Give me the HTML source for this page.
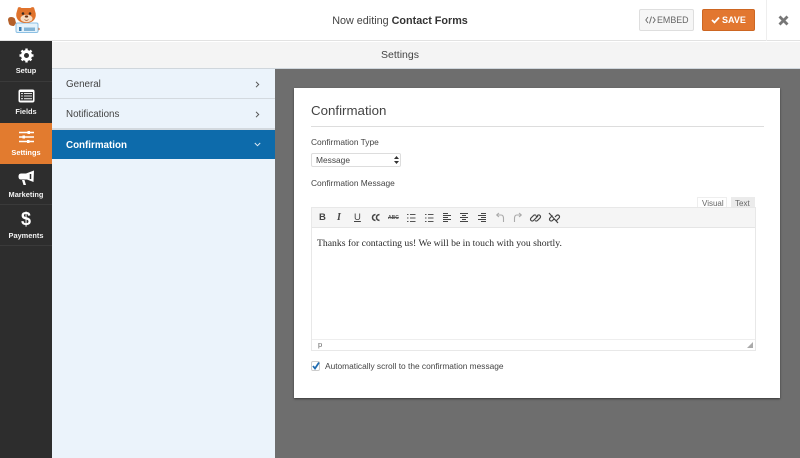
<!DOCTYPE html>
<html>
<head>
<meta charset="utf-8">
<style>
*{box-sizing:border-box}
html,body{margin:0;padding:0;width:800px;height:458px;overflow:hidden;background:#fff;font-family:"Liberation Sans",sans-serif}
.a{position:absolute}
.t{position:absolute;white-space:nowrap}
.side{text-align:center;color:#f2f2f2;font-size:7.4px;font-weight:bold;width:52px;left:0}
</style>
</head>
<body>
<!-- header -->
<div class="a" style="left:0;top:0;width:800px;height:41px;background:#fff;border-bottom:1px solid #e2e2e2"></div>
<svg class="a" style="left:0;top:0" width="44" height="40" viewBox="0 0 44 40">
<path d="M8 20q0-3 3-3t4 2l1 4-2 3q-4 0-5-2z" fill="#b4602a"/>
<path d="M37 26l3 3-3 3z" fill="#d9682a"/>
<rect x="16" y="23" width="22" height="9.500" rx="1.500" fill="#e4f2fb" stroke="#8cc0e4" stroke-width="1"/>
<path d="M17 11l1-3.500q2-1 3.500.5h9q1.500-1.500 3.500-.5l1 3.500q2 5-1 9-3 3-8 3t-8-3q-3-4-1-9z" fill="#e0732c"/>
<ellipse cx="26.500" cy="18.500" rx="6" ry="3.800" fill="#f6dcc2"/>
<circle cx="23" cy="13.500" r="1.300" fill="#3a2a20"/><circle cx="30" cy="13.500" r="1.300" fill="#3a2a20"/>
<ellipse cx="26.500" cy="16.500" rx="1.700" ry="1.100" fill="#6b3417"/>
<path d="M24.500 19.500q2 1.800 4 0" stroke="#a0522d" stroke-width=".7" fill="none"/>
<rect x="19" y="27" width="2.500" height="4" fill="#3a7fb5"/><rect x="24" y="27.500" width="11" height="3.500" fill="#83b4d6"/>
</svg>
<div class="t" style="left:0;width:800px;text-align:center;top:14px;font-size:10.800px;line-height:14px;color:#444">Now editing <b style="color:#333">Contact Forms</b></div>
<div class="a" style="left:639px;top:9px;width:55px;height:22px;background:#f6f6f6;border:1px solid #dedede;border-radius:2px"></div>
<svg class="a" style="left:645px;top:16px" width="11" height="8" viewBox="0 0 11 8" fill="none" stroke="#666" stroke-width=".9"><path d="M3 1L.8 4 3 7M8 1l2.200 3L8 7M6.500.5l-2 7"/></svg>
<div class="t" style="left:657px;top:14px;font-size:8.900px;line-height:12px;color:#666">EMBED</div>
<div class="a" style="left:702px;top:9px;width:53px;height:22px;background:#e27730;border:1px solid #cd6622;border-radius:2px"></div>
<svg class="a" style="left:711px;top:16px" width="9" height="8" viewBox="0 0 9 8"><path d="M1 4l2.500 2.500L8 1.500" fill="none" stroke="#fff" stroke-width="1.800"/></svg>
<div class="t" style="left:722px;top:14px;font-size:9px;line-height:12px;color:#fff;font-weight:bold">SAVE</div>
<div class="a" style="left:766px;top:0;width:1px;height:41px;background:#eee"></div>
<svg class="a" style="left:778px;top:15px" width="11" height="11" viewBox="0 0 11 11"><path d="M1.500 1.500l8 8M9.500 1.500l-8 8" stroke="#777" stroke-width="2.800"/></svg>

<!-- left nav -->
<div class="a" style="left:0;top:41px;width:52px;height:417px;background:#2d2d2d"></div>
<div class="a" style="left:0;top:81px;width:52px;height:1px;background:#3a3a3a"></div>
<div class="a" style="left:0;top:204px;width:52px;height:1px;background:#3a3a3a"></div>
<div class="a" style="left:0;top:245px;width:52px;height:1px;background:#3a3a3a"></div>
<div class="a" style="left:0;top:123px;width:52px;height:41px;background:#e27b2f"></div>
<svg class="a" style="left:19px;top:48px" width="15" height="15" viewBox="0 0 15 15"><circle cx="7.500" cy="7.500" r="4" fill="none" stroke="#fff" stroke-width="3"/><path d="M7.500 .5v14M.5 7.500h14M2.500 2.500l10 10M12.500 2.500l-10 10" stroke="#fff" stroke-width="2.400" stroke-dasharray="2.500 9 2.500"/></svg>
<div class="t side" style="top:66px;line-height:10px">Setup</div>
<svg class="a" style="left:18px;top:89px" width="17" height="14" viewBox="0 0 17 14"><rect x=".5" y=".5" width="16" height="13" rx="2" fill="#fff"/><rect x="2" y="3" width="13" height="8.500" fill="#333"/><path d="M3 4.500h2M6 4.500h8M3 7h2M6 7h8M3 9.700h2M6 9.700h8" stroke="#ddd" stroke-width="1.100"/></svg>
<div class="t side" style="top:107px;line-height:10px">Fields</div>
<svg class="a" style="left:19px;top:130px" width="15" height="14" viewBox="0 0 15 14"><path d="M0 2.500h15M0 7h15M0 11.500h15" stroke="#fff" stroke-width="1.500"/><rect x="8.500" y="1" width="2.500" height="3" fill="#fff"/><rect x="3.500" y="5.500" width="2.500" height="3" fill="#fff"/><rect x="8" y="10" width="2.500" height="3" fill="#fff"/></svg>
<div class="t side" style="top:148px;line-height:10px;color:#fff">Settings</div>
<svg class="a" style="left:18px;top:170px" width="17" height="16" viewBox="0 0 17 16"><path d="M16 .5L15.500 12 9 9.500H3Q.5 9.500.5 6.500T3 3.500H8z" fill="#fff"/><path d="M4 10l1.500 5h2.500L6.500 10z" fill="#fff"/><path d="M12.500 4v5" stroke="#2d2d2d" stroke-width="1.500"/></svg>
<div class="t side" style="top:190px;line-height:10px">Marketing</div>
<div class="t side" style="top:208px;font-size:18px;line-height:22px;color:#fff">$</div>
<div class="t side" style="top:231px;line-height:10px">Payments</div>

<!-- settings bar -->
<div class="a" style="left:52px;top:42px;width:748px;height:26px;background:#f4f4f4"></div>
<div class="a" style="left:52px;top:68px;width:748px;height:1px;background:#cfd6dc"></div>
<div class="t" style="left:52px;width:696px;text-align:center;top:48px;font-size:10.500px;line-height:14px;color:#444">Settings</div>

<!-- panel sidebar -->
<div class="a" style="left:52px;top:69px;width:223px;height:389px;background:#ebf3fb"></div>
<div class="a" style="left:52px;top:98px;width:223px;height:1px;background:#d3d9df"></div>
<div class="a" style="left:52px;top:128px;width:223px;height:2px;background:#d3d9df"></div>
<div class="a" style="left:52px;top:130px;width:223px;height:29px;background:#0d6bab"></div>
<div class="t" style="left:66px;top:78px;font-size:9.800px;line-height:14px;color:#444">General</div>
<div class="t" style="left:66px;top:108px;font-size:9.800px;line-height:14px;color:#444">Notifications</div>
<div class="t" style="left:66px;top:139px;font-size:9.800px;line-height:14px;color:#fff;font-weight:bold">Confirmation</div>
<svg class="a" style="left:255px;top:81px" width="5" height="7" viewBox="0 0 5 7"><path d="M1 .8l2.700 2.700L1 6.200" fill="none" stroke="#555" stroke-width="1"/></svg>
<svg class="a" style="left:255px;top:111px" width="5" height="7" viewBox="0 0 5 7"><path d="M1 .8l2.700 2.700L1 6.200" fill="none" stroke="#555" stroke-width="1"/></svg>
<svg class="a" style="left:254px;top:142px" width="7" height="5" viewBox="0 0 7 5"><path d="M.8 1l2.700 2.700L6.200 1" fill="none" stroke="#dfeaf3" stroke-width="1"/></svg>

<!-- content -->
<div class="a" style="left:275px;top:69px;width:525px;height:389px;background:#6e6e6e"></div>
<div class="a" style="left:294px;top:88px;width:486px;height:310px;background:#fff;box-shadow:0 1px 2px rgba(0,0,0,.5)"></div>
<div class="t" style="left:311px;top:102px;font-size:13.300px;line-height:17px;color:#444">Confirmation</div>
<div class="a" style="left:311px;top:126px;width:453px;height:1px;background:#ddd"></div>
<div class="t" style="left:311px;top:137px;font-size:8.400px;line-height:11px;color:#444">Confirmation Type</div>
<div class="a" style="left:311px;top:153px;width:90px;height:14px;background:#fff;border:1px solid #ddd;border-radius:2px"></div>
<div class="t" style="left:316px;top:155px;font-size:8.400px;line-height:11px;color:#444">Message</div>
<svg class="a" style="left:394px;top:156px" width="5" height="8" viewBox="0 0 5 8"><path d="M2.500 0L5 3H0zM2.500 8L0 5h5z" fill="#333"/></svg>
<div class="t" style="left:311px;top:178px;font-size:8.400px;line-height:11px;color:#444">Confirmation Message</div>

<!-- tabs -->
<div class="a" style="left:697px;top:197px;width:30px;height:11px;background:#fff;border:1px solid #eee;border-bottom:0"></div>
<div class="t" style="left:702px;top:198px;font-size:8px;line-height:11px;color:#666">Visual</div>
<div class="a" style="left:731px;top:197px;width:24px;height:11px;background:#ebebeb"></div>
<div class="t" style="left:735px;top:198px;font-size:8px;line-height:11px;color:#666">Text</div>

<!-- editor -->
<div class="a" style="left:311px;top:207px;width:445px;height:144px;background:#fff;border:1px solid #e8e8e8"></div>
<div class="a" style="left:312px;top:208px;width:443px;height:20px;background:#f5f5f5;border-bottom:1px solid #e5e5e5"></div>
<div class="t" style="left:319px;top:212px;font-size:9.500px;line-height:12px;font-weight:bold;color:#444">B</div>
<div class="t" style="left:337px;top:212px;font-size:10px;line-height:12px;font-style:italic;font-weight:bold;font-family:'Liberation Serif',serif;color:#444">I</div>
<div class="t" style="left:354px;top:212px;font-size:9.500px;line-height:12px;text-decoration:underline;color:#444">U</div>
<div class="t" style="left:388px;top:214px;font-size:5px;line-height:8px;font-weight:bold;color:#555;text-decoration:line-through">ABC</div>
<svg class="a" style="left:0;top:0" width="800" height="458" viewBox="0 0 800 458" fill="none" stroke="#555" stroke-width="1.100">
<path d="M375.500 214.500q-3 .5-3 3t3 3M379.500 214.500q-3 .5-3 3t3 3" stroke="#444" stroke-width="1.500"/>
<path d="M407 214.500h1.500M407 218h1.500M407 221.500h1.500M410 214.500h5.500M410 218h5.500M410 221.500h5.500"/>
<path d="M425 214.500h1.500M425 218h1.500M425 221.500h1.500M428 214.500h5.500M428 218h5.500M428 221.500h5.500"/>
<path d="M443 213.500h5M443 215.500h8M443 217.500h5M443 219.500h8M443 221.500h5" stroke="#444"/>
<path d="M460 213.500h8M462 215.500h4M460 217.500h8M462 219.500h4M460 221.500h8" stroke="#444"/>
<path d="M481 213.500h5M478 215.500h8M481 217.500h5M478 219.500h8M481 221.500h5" stroke="#444"/>
<path d="M496.500 215H501Q503.500 215 503.500 218.500V222M496.500 215l2.500-2M496.500 215l2.500 2" stroke="#aaa"/>
<path d="M521.500 215H517Q514.500 215 514.500 218.500V222M521.500 215l-2.500-2M521.500 215l-2.500 2" stroke="#aaa"/>
<g stroke="#444" stroke-width="1.200" transform="translate(530 212)">
<path d="M5 7l-1.500 1.500a1.700 1.700 0 0 1-2.500-2.500L3.500 3.500a1.700 1.700 0 0 1 2.500 0M6 5l1.500-1.500a1.700 1.700 0 0 1 2.500 2.500L7.500 8.500a1.700 1.700 0 0 1-2.500 0M4 8l4-4"/>
<path d="M24 7l-1.500 1.500a1.700 1.700 0 0 1-2.500-2.500L22.500 3.500M25 5l1.500-1.500a1.700 1.700 0 0 1 2.500 2.500L26.500 8.500M19 1l9 10"/>
</g>
</svg>
<div class="t" style="left:317px;top:237px;font-size:9.700px;line-height:13px;font-family:'Liberation Serif',serif;color:#2a2a2a">Thanks for contacting us! We will be in touch with you shortly.</div>
<div class="a" style="left:312px;top:339px;width:443px;height:1px;background:#eee"></div>
<div class="t" style="left:318px;top:340px;font-size:7.500px;line-height:10px;color:#666">p</div>
<svg class="a" style="left:747px;top:342px" width="6" height="6" viewBox="0 0 6 6"><path d="M6 0v6H0z" fill="#aaa"/></svg>

<!-- checkbox -->
<div class="a" style="left:311px;top:361px;width:9px;height:10px;background:#fff;border:1px solid #ccc;border-radius:2px"></div>
<svg class="a" style="left:311px;top:361px" width="10" height="10" viewBox="0 0 10 10"><path d="M2 5l2 2.500L8 1.500" fill="none" stroke="#1f6bb0" stroke-width="1.800"/></svg>
<div class="t" style="left:325px;top:361px;font-size:8.350px;line-height:11px;color:#444">Automatically scroll to the confirmation message</div>
</body>
</html>
